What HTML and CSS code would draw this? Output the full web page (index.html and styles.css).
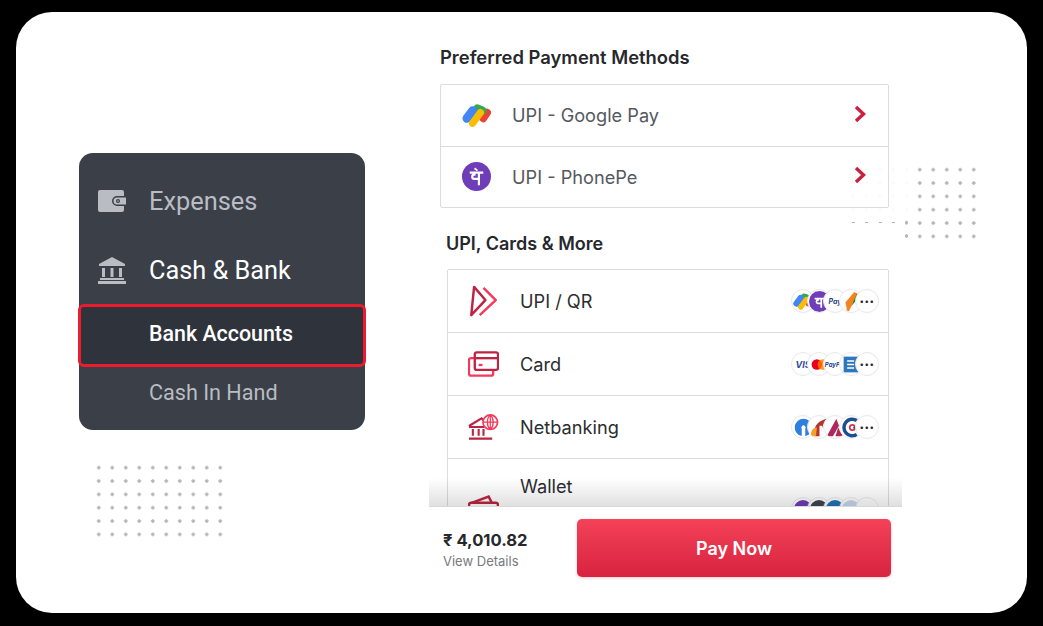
FILE: index.html
```html
<!DOCTYPE html>
<html lang="en">
  <head>
    <meta charset="UTF-8" />
    <title>Payment Methods</title>
    <link rel="stylesheet" href="styles.css">
  </head>
  <body>
    <div class="card">
      <div class="dots dots-left"></div>
      <div class="dots dots-right"></div>
      <div class="dots dots-right-edge"></div>
      <div class="dots dots-right-faint"></div>
      <div class="dashes"></div>

      <div class="left-col">
        <div class="side-panel">
          <div class="side-row muted">
            <svg class="side-icon" viewBox="0 0 28 22">
              <path fill="#b9bcc2" d="M2 0H24a2 2 0 0 1 2 2V6H19a5 5 0 0 0 0 10h7v4a2 2 0 0 1-2 2H2a2 2 0 0 1-2-2V2A2 2 0 0 1 2 0Z" />
              <path fill="#b9bcc2" d="M19 7.5H28V14.5H19a3.5 3.5 0 0 1 0-7Z" />
              <circle cx="20" cy="11" r="2" fill="#3a3f48" />
              <circle cx="20" cy="11" r="0.8" fill="#b9bcc2" />
            </svg>
            <span>Expenses</span>
          </div>
          <div class="side-row">
            <svg class="side-icon bank-icon" viewBox="0 0 28 27">
              <path fill="#b9bcc2" d="M14 0 27 7V9H1V7Z" />
              <path fill="#b9bcc2" d="M4 11H7V20H4ZM12.5 11H15.5V20H12.5ZM21 11H24V20H21ZM2 21H26V23H2ZM0 24H28V27H0Z" />
            </svg>
            <span>Cash &amp; Bank</span>
          </div>
          <div class="side-sub selected">Bank Accounts</div>
          <div class="side-sub">Cash In Hand</div>
        </div>
      </div>

      <div class="right-col">
        <div class="scroll-area">
          <h2 class="title">Preferred Payment Methods</h2>
          <div class="pref-box">
            <div class="pref-row">
              <svg class="pref-logo" viewBox="0 0 30 26">
                <path d="M22 16 26 10" stroke="#ea4335" stroke-width="8" stroke-linecap="round" />
                <path d="M12 12 16 6 21 8" fill="none" stroke="#34a853" stroke-width="9" stroke-linecap="round" stroke-linejoin="round" />
                <path d="M5 16 11 8" stroke="#4285f4" stroke-width="9" stroke-linecap="round" />
                <path d="M11 21 19 10" stroke="#fbbc04" stroke-width="7.5" stroke-linecap="round" />
              </svg>
              <span>UPI - Google Pay</span>
              <svg class="chevron" viewBox="0 0 12 18"><path d="M2 2 9.5 9 2 16" /></svg>
            </div>
            <div class="pref-row">
              <svg class="pref-logo" viewBox="0 0 30 30">
                <circle cx="15" cy="15" r="15" fill="#6f3db8" />
                <path d="M8 11H22M17.5 11V24M17.5 17.5H12.5C10 17.5 10 13 12.5 13H14" fill="none" stroke="#fff" stroke-width="2.3" />
                <path d="M13 6.5 16 9" fill="none" stroke="#fff" stroke-width="1.8" />
              </svg>
              <span>UPI - PhonePe</span>
              <svg class="chevron" viewBox="0 0 12 18"><path d="M2 2 9.5 9 2 16" /></svg>
            </div>
          </div>

          <h2 class="title title-more">UPI, Cards &amp; More</h2>
          <div class="more-box">
            <div class="more-row">
              <svg class="more-icon" viewBox="0 0 30 34">
                <path d="M5 2 17 16 2 32Z" fill="none" stroke="#bd2443" stroke-width="2.6" stroke-linejoin="round" />
                <path d="M15 3 28 16 11 32" fill="none" stroke="#f4395c" stroke-width="2.6" stroke-linejoin="round" />
              </svg>
              <span class="more-name">UPI / QR</span>
              <div class="mini-stack">
                <span class="mini">
                  <svg viewBox="0 0 30 26">
                    <path d="M22 16 26 10" stroke="#ea4335" stroke-width="8" stroke-linecap="round" />
                    <path d="M12 12 16 6 21 8" fill="none" stroke="#34a853" stroke-width="9" stroke-linecap="round" stroke-linejoin="round" />
                    <path d="M5 16 11 8" stroke="#4285f4" stroke-width="9" stroke-linecap="round" />
                    <path d="M11 21 19 10" stroke="#fbbc04" stroke-width="7.5" stroke-linecap="round" />
                  </svg>
                </span>
                <span class="mini">
                  <svg viewBox="0 0 30 30">
                    <circle cx="15" cy="15" r="15" fill="#6f3db8" />
                    <path d="M8 11H22M17.5 11V24M17.5 17.5H12.5C10 17.5 10 13 12.5 13H14" fill="none" stroke="#fff" stroke-width="2.5" />
                  </svg>
                </span>
                <span class="mini mini-text paytm">Pay</span>
                <span class="mini">
                  <svg viewBox="0 0 24 24">
                    <path d="M15 1 19 3 9 23 6 22Z" fill="#f58220" />
                    <path d="M15 1 13 8 7 22 5 13Z" fill="#f58220" />
                    <path d="M18 3 21 6 12 17Z" fill="#138808" />
                  </svg>
                </span>
                <span class="mini mini-more">&bull;&bull;&bull;</span>
              </div>
            </div>
            <div class="more-row">
              <svg class="more-icon" viewBox="0 0 32 26">
                <rect x="1" y="7" width="25" height="18" rx="2" fill="none" stroke="#f4395c" stroke-width="2.4" />
                <rect x="7" y="1" width="24" height="18" rx="2" fill="#fff" stroke="#bd2443" stroke-width="2.4" />
                <path d="M7 7H31" stroke="#bd2443" stroke-width="2.4" />
                <path d="M11 14H15" stroke="#f4395c" stroke-width="2.4" />
              </svg>
              <span class="more-name">Card</span>
              <div class="mini-stack">
                <span class="mini mini-text visa">VIS</span>
                <span class="mini">
                  <svg viewBox="0 0 24 24">
                    <circle cx="9" cy="12" r="6" fill="#eb001b" />
                    <circle cx="16" cy="12" r="6" fill="#f79e1b" />
                    <path d="M12.5 7.1a6 6 0 0 1 0 9.8a6 6 0 0 1 0-9.8Z" fill="#ff5f00" />
                  </svg>
                </span>
                <span class="mini mini-text paypal">PayPal</span>
                <span class="mini">
                  <svg viewBox="0 0 24 24">
                    <rect x="3" y="3" width="17" height="18" fill="#2e77bc" />
                    <path d="M7 8H15M7 12H15M7 16H15" stroke="#fff" stroke-width="1.8" />
                  </svg>
                </span>
                <span class="mini mini-more">&bull;&bull;&bull;</span>
              </div>
            </div>
            <div class="more-row">
              <svg class="more-icon" viewBox="0 0 32 28">
                <path d="M1 13 14 5 19 10M1 14H17" fill="none" stroke="#bd2443" stroke-width="2.2" />
                <path d="M5 16V23M11 16V23M16 16V23M1 26H25" fill="none" stroke="#bd2443" stroke-width="2.2" />
                <circle cx="23" cy="9" r="7.5" fill="#fff" stroke="#f4395c" stroke-width="1.8" />
                <path d="M15.5 9H30.5M23 1.5V16.5M23 1.5C19 5 19 13 23 16.5M23 1.5C27 5 27 13 23 16.5" fill="none" stroke="#f4395c" stroke-width="1.3" />
              </svg>
              <span class="more-name">Netbanking</span>
              <div class="mini-stack">
                <span class="mini">
                  <svg viewBox="0 0 24 24">
                    <path d="M12 2a10 10 0 0 0-2 19.8V13.5a2.5 2.5 0 1 1 4 0V21.8A10 10 0 0 0 12 2Z" fill="#2d7fe0" />
                  </svg>
                </span>
                <span class="mini">
                  <svg viewBox="0 0 24 24">
                    <path d="M7 22C4 14 8 5 20 2 16 8 14 14 13 22Z" fill="#b5342c" />
                    <path d="M2 22C2 15 5 12 9 12L8 22Z" fill="#f5a02c" />
                    <path d="M12 10H15L14 22H12Z" fill="#fff" />
                  </svg>
                </span>
                <span class="mini">
                  <svg viewBox="0 0 24 24">
                    <path d="M2 22 13 2 16 10 9 22Z" fill="#ae285d" />
                    <path d="M15 12 21 22H12Z" fill="#ae285d" />
                  </svg>
                </span>
                <span class="mini">
                  <svg viewBox="0 0 24 24">
                    <path d="M18 4A9.5 9.5 0 1 0 18 20" fill="none" stroke="#1c4f8f" stroke-width="4" />
                    <circle cx="13" cy="12" r="3" fill="none" stroke="#d8344a" stroke-width="2" />
                    <path d="M14 12H23" stroke="#1c4f8f" stroke-width="2" />
                  </svg>
                </span>
                <span class="mini mini-more">&bull;&bull;&bull;</span>
              </div>
            </div>
            <div class="more-row wallet-row">
              <svg class="more-icon" viewBox="0 0 30 26">
                <path d="M1 8 20 1 23 7" fill="none" stroke="#bd2443" stroke-width="2.4" />
                <rect x="1" y="7" width="28" height="18" rx="2" fill="#fff" stroke="#bd2443" stroke-width="2.4" />
              </svg>
              <span class="more-name">Wallet</span>
              <div class="mini-stack">
                <span class="mini"><i class="mini-dot purple"></i></span>
                <span class="mini"><i class="mini-dot slate"></i></span>
                <span class="mini"><i class="mini-dot blue"></i></span>
                <span class="mini"><i class="mini-dot pale"></i></span>
                <span class="mini"></span>
              </div>
            </div>
          </div>
          <div class="fade"></div>
        </div>

        <div class="pay-bar">
          <div class="pay-total">
            <div class="amount">&#8377; 4,010.82</div>
            <div class="details">View Details</div>
          </div>
          <button type="button" class="pay-button">Pay Now</button>
        </div>
      </div>
    </div>
  </body>
</html>
```

FILE: styles.css
```css
* {
  box-sizing: border-box;
}
html,
body {
  margin: 0;
  padding: 0;
  height: 100%;
  overflow: hidden;
  background-color: #000000;
}
body {
  padding: 12px 16px 13px;
  font-family: "Inter", sans-serif;
}
.card {
  position: relative;
  display: flex;
  width: 1011px;
  height: 601px;
  background-color: #ffffff;
  border-radius: 36px;
  overflow: hidden;
}

/* dotted decoration */
.dots {
  position: absolute;
  background-image: radial-gradient(circle, #b4b4b8 1.4px, transparent 2px);
  background-size: 13.5px 13.35px;
}
.dots-left {
  left: 75.5px;
  top: 449px;
  width: 135px;
  height: 80.1px;
}
.dots-right {
  left: 897.25px;
  top: 150.6px;
  width: 67.5px;
  height: 80.1px;
}
.dots-right-edge {
  left: 883.75px;
  top: 204px;
  width: 13.5px;
  height: 26.7px;
}
.dots-right-faint {
  z-index: 2;
  left: 830px;
  top: 150.6px;
  width: 67.5px;
  height: 66.75px;
  opacity: 0.06;
}
.dashes {
  position: absolute;
  z-index: 2;
  left: 835.5px;
  top: 210px;
  width: 48px;
  height: 1px;
  background-image: repeating-linear-gradient(90deg, #b4b4b8 0 3px, transparent 3px 13.5px);
}

/* left panel */
.left-col {
  width: 413px;
  padding: 141px 0 0 63px;
}
.side-panel {
  width: 285.5px;
  padding: 14px 0 13px;
  background-color: #3a3f48;
  border-radius: 14px;
  color: #ffffff;
  font-family: "Roboto", sans-serif;
}
.side-row {
  display: flex;
  align-items: center;
  height: 68.5px;
  padding: 1px 0 0 19px;
  font-size: 25.3px;
}
.side-row.muted {
  padding-top: 0;
  font-size: 25.4px;
  color: #b9bcc2;
}
.side-icon {
  flex: none;
  width: 28px;
  height: 22px;
  margin-right: 23px;
}
.bank-icon {
  height: 27px;
}
.side-sub {
  display: flex;
  align-items: center;
  height: 50px;
  padding-left: 70px;
  font-size: 21.6px;
  color: #b9bcc2;
}
.side-sub.selected {
  height: 63px;
  width: 288px;
  margin: 0 -1px;
  padding: 0 0 5px 68px;
  background-color: #2f333b;
  border: 3px solid #ec1c2e;
  border-radius: 6px;
  font-size: 21.4px;
  color: #ffffff;
  font-weight: 500;
}

/* right column */
.right-col {
  display: flex;
  flex-direction: column;
  width: 473px;
}
.scroll-area {
  position: relative;
  height: 494px;
  padding: 33px 0 0 11px;
  overflow: hidden;
}
.title {
  margin: 0 0 15px;
  font-size: 18.4px;
  line-height: 24px;
  font-weight: 600;
  color: #26282c;
}
.title-more {
  margin: 24px 0 13px 6px;
  font-size: 18px;
}
.pref-box {
  width: 449px;
  border: 1.5px solid #dcdcdc;
  border-radius: 2px;
}
.pref-row {
  display: flex;
  align-items: center;
  height: 60.5px;
  padding: 0 22px 0 21px;
  font-size: 18.2px;
  color: #55585e;
}
.pref-row + .pref-row {
  height: 61.5px;
  border-top: 1.5px solid #dcdcdc;
}
.pref-logo {
  flex: none;
  width: 29px;
  height: 29px;
  margin-right: 21px;
}
.chevron {
  width: 12px;
  height: 18px;
  margin: -3px 0 0 auto;
  fill: none;
  stroke: #c9213f;
  stroke-width: 3.4;
}
.more-box {
  width: 442px;
  margin-left: 7px;
  border: 1.5px solid #dcdcdc;
  border-radius: 2px;
}
.more-row {
  display: flex;
  align-items: center;
  height: 63px;
  padding: 0 9px 0 20px;
  border-bottom: 1.5px solid #dcdcdc;
}
.more-row.wallet-row {
  height: 100px;
  border-bottom: none;
}
.more-icon {
  flex: none;
  width: 31px;
  height: 32px;
  margin-right: 21px;
}
.more-name {
  font-size: 18.2px;
  color: #2b2d31;
}
.wallet-row .more-name {
  align-self: flex-start;
  padding-top: 16px;
}
.mini-stack {
  display: flex;
  margin-left: auto;
}
.mini {
  display: flex;
  align-items: center;
  justify-content: center;
  width: 24px;
  height: 24px;
  margin-left: -8px;
  background-color: #ffffff;
  border: 1px solid #e8e8ea;
  border-radius: 50%;
  overflow: hidden;
}
.mini svg {
  flex: none;
  width: 21px;
  height: 21px;
}
.mini-text {
  font-size: 7px;
  font-weight: 700;
  font-style: italic;
  white-space: nowrap;
}
.paytm {
  color: #1d3f7c;
}
.visa {
  font-size: 9px;
  color: #2a4b9b;
}
.paypal {
  font-size: 6px;
  color: #22408f;
}
.mini-more {
  font-size: 8px;
  letter-spacing: 0.5px;
  color: #26282c;
}
.mini-dot {
  width: 18px;
  height: 18px;
  border-radius: 50%;
}
.mini-dot.purple {
  background-color: #6f3db8;
}
.mini-dot.slate {
  background-color: #3f4650;
}
.mini-dot.blue {
  background-color: #1f74b8;
}
.mini-dot.pale {
  background-color: #c8d8f0;
}
.fade {
  position: absolute;
  left: 0;
  right: 0;
  bottom: 0;
  height: 28px;
  background: linear-gradient(180deg, rgba(0, 0, 0, 0), rgba(0, 0, 0, 0.12));
}

/* pay bar */
.pay-bar {
  flex: 1;
  display: flex;
  padding: 12px 11px 0 14px;
  background-color: #ffffff;
  border-top: 1px solid #d8d8d8;
}
.pay-total {
  width: 134px;
  padding-top: 10px;
}
.amount {
  font-size: 16.6px;
  line-height: 22px;
  font-weight: 700;
  color: #26282c;
}
.details {
  margin-top: 2px;
  font-size: 13px;
  line-height: 16px;
  color: #77797e;
}
.pay-button {
  width: 314px;
  height: 58px;
  border: none;
  border-radius: 5px;
  background: linear-gradient(180deg, #f44259, #d8233f);
  box-shadow: 0 1px 3px rgba(216, 35, 63, 0.25);
  font-family: "Inter", sans-serif;
  font-size: 18px;
  font-weight: 600;
  color: #ffffff;
}
```
